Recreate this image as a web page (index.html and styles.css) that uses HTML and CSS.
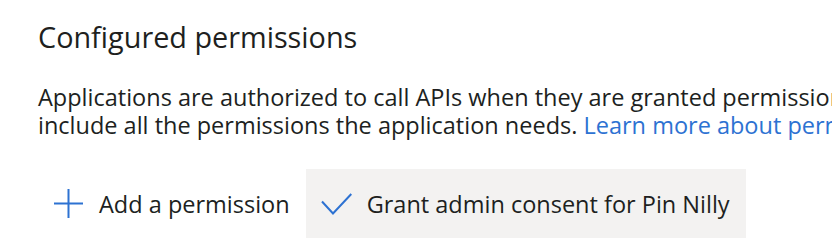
FILE: index.html
```html
<!DOCTYPE html>
<html>
<head>
<meta charset="utf-8">
<link rel="stylesheet" href="styles.css">
</head>
<body>
<section class="panel">
  <h2 class="title">Configured permissions</h2>
  <p class="desc">
    <span class="line">Applications are authorized to call APIs when they are granted permissions by users/admins as part of the consent process. The list of configured permissions should</span>
    <span class="line">include all the permissions the application needs. <a class="link" href="#">Learn more about permissions and consent</a></span>
  </p>
  <div class="toolbar">
    <button class="cmd">
      <svg class="icon" width="29" height="29" viewBox="0 0 29 29"><path d="M14.5 0v29M0 14.5h29" stroke="#2d72d2" stroke-width="2" fill="none"/></svg>
      <span>Add a permission</span>
    </button>
    <button class="cmd cmd-active">
      <svg class="icon" width="31" height="22" viewBox="0 0 31 22"><path d="M1 8.5l11 12L30.3 1" stroke="#2d72d2" stroke-width="2" fill="none"/></svg>
      <span>Grant admin consent for Pin Nilly</span>
    </button>
  </div>
</section>
</body>
</html>
```
FILE: styles.css
```css
html, body {
  margin: 0;
  padding: 0;
  background: #ffffff;
  overflow: hidden;
}
.panel {
  width: 1400px;
  padding: 0 0 0 38px;
  font-family: "Open Sans", "Noto Sans", sans-serif;
  color: #323130;
}
.title {
  margin: 0;
  padding-top: 17px;
  font-size: 28.8px;
  font-weight: 400;
  line-height: 40px;
  color: #201f1e;
}
.desc {
  margin: 26px 0 0 0;
  font-size: 23.5px;
  line-height: 28px;
  color: #201f1e;
}
.line {
  display: block;
  white-space: nowrap;
}
.link {
  color: #2d72d2;
  text-decoration: none;
}
.toolbar {
  display: flex;
  margin-top: 30px;
}
.cmd {
  display: flex;
  align-items: center;
  gap: 16px;
  height: 69px;
  padding: 0 16px;
  border: none;
  background: transparent;
  font-family: inherit;
  font-size: 23.5px;
  color: #201f1e;
}
.cmd-active {
  gap: 15px;
  padding: 0 16px 0 15px;
  background: #f3f2f1;
}
.icon {
  flex: none;
}
```
